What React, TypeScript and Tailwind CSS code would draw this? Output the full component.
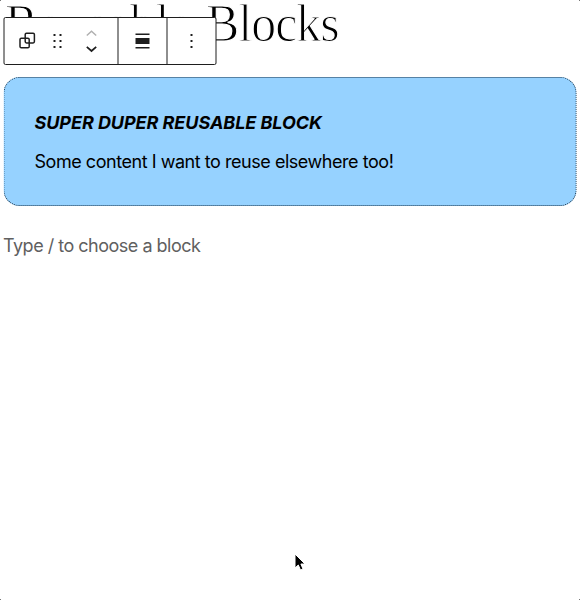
function Toolbar() {
  return (
    <div className="absolute left-[3px] top-[17px] flex h-12 w-[213px] translate-x-[0.5px] rounded-[2px] border border-[#1e1e1e] bg-white text-[#1e1e1e]">
      <div className="flex w-[114px] items-center border-r border-[#1e1e1e]">
        <svg className="ml-[11px] size-6" viewBox="0 0 24 24" fill="none" stroke="currentColor" strokeWidth="1.5">
          <rect x="9.7" y="4.3" width="9.2" height="9.6" rx="1.3" />
          <rect x="4.5" y="9.2" width="9.2" height="9.6" rx="1.3" />
        </svg>
        <svg className="ml-[6px] size-6" viewBox="0 0 24 24" fill="currentColor">
          <path d="M8 5h2v2H8zM14 5h2v2h-2zM8 11h2v2H8zM14 11h2v2h-2zM8 17h2v2H8zM14 17h2v2h-2z" />
        </svg>
        <svg className="ml-[9.5px] h-[30px] w-6" viewBox="0 0 24 30" fill="none" strokeWidth="1.5">
          <path d="M7.3 9.5 12 5.3l4.7 4.2" stroke="#b0b0b0" />
          <path d="M7.3 20.8 12 25l4.7-4.2" stroke="currentColor" strokeWidth="1.7" />
        </svg>
      </div>
      <div className="flex w-[49px] items-center justify-center border-r border-[#1e1e1e]">
        <svg className="size-6" viewBox="0 0 24 24" fill="currentColor">
          <path d="M5 4.5h14V6H5zM5 9h14v6H5zM5 18h14v1.5H5z" />
        </svg>
      </div>
      <div className="flex flex-1 items-center justify-center">
        <svg className="size-6" viewBox="0 0 24 24" fill="currentColor">
          <path d="M11 5h2v2h-2zM11 11h2v2h-2zM11 17h2v2h-2z" />
        </svg>
      </div>
    </div>
  );
}

export default function App() {
  return (
    <main className="relative h-[600px] w-[580px] overflow-hidden bg-white px-[3px] font-['Inter',sans-serif] text-[18px] text-black">
      <h1 className="-mt-[7px] flex h-[84px] whitespace-nowrap pl-[2px] font-['Liberation_Serif',serif] text-[53px] leading-[60px] text-black [-webkit-text-stroke:1.2px_white]">
        <span className="w-[201px] origin-left scale-x-[0.94] tracking-[0.7px]">Reusable</span>
        <span className="origin-left scale-x-[0.94] tracking-[-1px]">Blocks</span>
      </h1>
      <Toolbar />
      <section className="h-[129px] w-[573px] translate-x-[0.5px] rounded-[16px] border border-dotted border-[#17334a] bg-[#96d2ff] pl-[30px] pt-[31px] leading-[27px]">
        <h2 className="whitespace-nowrap font-bold italic tracking-[-0.05px]">SUPER DUPER REUSABLE BLOCK</h2>
        <p className="mt-[12px] whitespace-nowrap tracking-[-0.46px]">Some content I want to reuse elsewhere too!</p>
      </section>
      <p className="mt-[26px] whitespace-nowrap tracking-[-0.5px] leading-[27px] text-[#606060]">Type / to choose a block</p>
      <svg className="absolute left-[293px] top-[551px] h-[22px] w-[14px]" viewBox="0 0 14 22">
        <path d="M2 3v14l3.3-3 2.2 5 2.5-1-2.1-5H12z" fill="black" stroke="white" strokeWidth="1" />
      </svg>
      <i className="absolute left-0 top-0 size-px bg-[#777]" />
      <i className="absolute right-0 top-0 size-px bg-[#777]" />
      <i className="absolute bottom-0 left-0 size-px bg-[#777]" />
      <i className="absolute bottom-0 right-0 size-px bg-[#777]" />
    </main>
  );
}
